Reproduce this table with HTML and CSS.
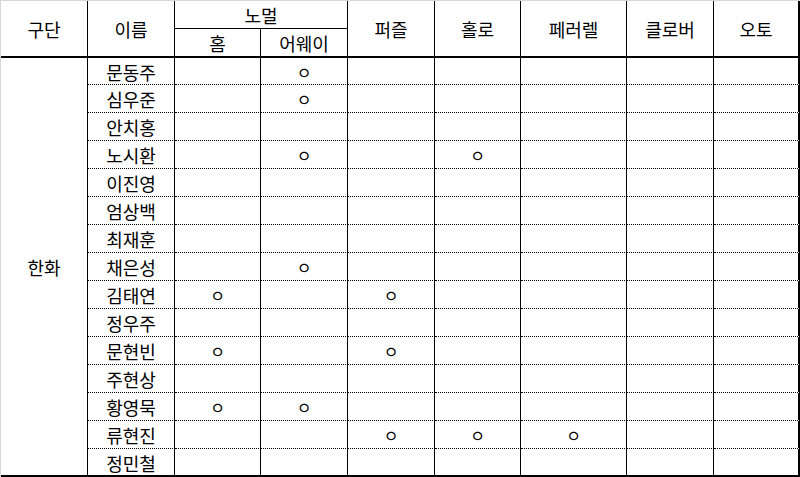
FILE: index.html
```html
<!DOCTYPE html>
<html lang="ko">
<head>
<meta charset="utf-8">
<title>한화</title>
<link rel="stylesheet" href="styles.css">
</head>
<body>
<div class="sheet">
  <div class="c h span2 thick">구단</div>
  <div class="c h span2 thick">이름</div>
  <div class="c h wide">노멀</div>
  <div class="c h span2 thick">퍼즐</div>
  <div class="c h span2 thick">홀로</div>
  <div class="c h span2 thick">페러렐</div>
  <div class="c h span2 thick">클로버</div>
  <div class="c h span2 thick last">오토</div>
  <div class="c h thick">홈</div>
  <div class="c h thick">어웨이</div>

  <div class="c team">한화</div>

  <div class="c">문동주</div><div class="c"></div><div class="c mark">ㅇ</div><div class="c"></div><div class="c"></div><div class="c"></div><div class="c"></div><div class="c last"></div>
  <div class="c">심우준</div><div class="c"></div><div class="c mark">ㅇ</div><div class="c"></div><div class="c"></div><div class="c"></div><div class="c"></div><div class="c last"></div>
  <div class="c">안치홍</div><div class="c"></div><div class="c"></div><div class="c"></div><div class="c"></div><div class="c"></div><div class="c"></div><div class="c last"></div>
  <div class="c">노시환</div><div class="c"></div><div class="c mark">ㅇ</div><div class="c"></div><div class="c mark">ㅇ</div><div class="c"></div><div class="c"></div><div class="c last"></div>
  <div class="c">이진영</div><div class="c"></div><div class="c"></div><div class="c"></div><div class="c"></div><div class="c"></div><div class="c"></div><div class="c last"></div>
  <div class="c">엄상백</div><div class="c"></div><div class="c"></div><div class="c"></div><div class="c"></div><div class="c"></div><div class="c"></div><div class="c last"></div>
  <div class="c">최재훈</div><div class="c"></div><div class="c"></div><div class="c"></div><div class="c"></div><div class="c"></div><div class="c"></div><div class="c last"></div>
  <div class="c">채은성</div><div class="c"></div><div class="c mark">ㅇ</div><div class="c"></div><div class="c"></div><div class="c"></div><div class="c"></div><div class="c last"></div>
  <div class="c">김태연</div><div class="c mark">ㅇ</div><div class="c"></div><div class="c mark">ㅇ</div><div class="c"></div><div class="c"></div><div class="c"></div><div class="c last"></div>
  <div class="c">정우주</div><div class="c"></div><div class="c"></div><div class="c"></div><div class="c"></div><div class="c"></div><div class="c"></div><div class="c last"></div>
  <div class="c">문현빈</div><div class="c mark">ㅇ</div><div class="c"></div><div class="c mark">ㅇ</div><div class="c"></div><div class="c"></div><div class="c"></div><div class="c last"></div>
  <div class="c">주현상</div><div class="c"></div><div class="c"></div><div class="c"></div><div class="c"></div><div class="c"></div><div class="c"></div><div class="c last"></div>
  <div class="c">황영묵</div><div class="c mark">ㅇ</div><div class="c mark">ㅇ</div><div class="c"></div><div class="c"></div><div class="c"></div><div class="c"></div><div class="c last"></div>
  <div class="c">류현진</div><div class="c"></div><div class="c"></div><div class="c mark">ㅇ</div><div class="c mark">ㅇ</div><div class="c mark">ㅇ</div><div class="c"></div><div class="c last"></div>
  <div class="c end">정민철</div><div class="c end"></div><div class="c end"></div><div class="c end"></div><div class="c end"></div><div class="c end"></div><div class="c end"></div><div class="c end last"></div>
</div>
</body>
</html>
```

FILE: styles.css
```css
* {
  box-sizing: border-box;
}

html, body {
  margin: 0;
  padding: 0;
  background: #ffffff;
}

.sheet {
  width: 800px;
  height: 477px;
  display: grid;
  grid-template-columns: 87px 87px 86px 87px 87px 86px 106px 87px 86px;
  grid-template-rows: 28px 29px 27px repeat(13, 28px) 28px;
  border-left: 1px solid #d6d6d6;
  border-top: 1px solid #d6d6d6;
  font-family: "Noto Sans CJK KR", "Noto Sans", sans-serif;
  font-size: 18px;
  color: #000000;
  overflow: hidden;
}

.c {
  display: flex;
  align-items: center;
  justify-content: center;
  border-right: 1px solid #000000;
  border-bottom: 1px dotted #000000;
  line-height: 1;
  padding-top: 1px;
}

.mark {
  font-size: 16px;
}

.h {
  border-bottom: 1px solid #000000;
}

.span2 {
  grid-row: span 2;
}

.wide {
  grid-column: span 2;
}

.thick {
  border-bottom: 2px solid #000000;
}

.team {
  grid-row: span 15;
  border-bottom: 2px solid #000000;
}

.last {
  border-right: 2px solid #000000;
}

.end {
  border-bottom: 2px solid #000000;
}
```
